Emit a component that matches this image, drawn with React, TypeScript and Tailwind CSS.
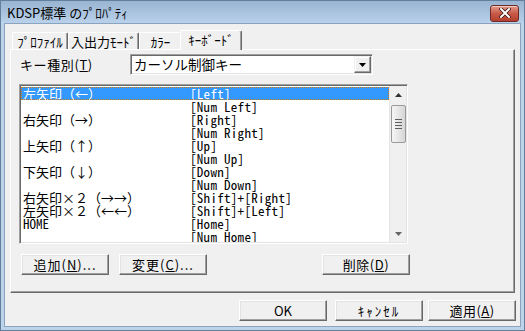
import React from "react";

const rows: [string, string][] = [
  ["左矢印（←）", "[Left]"],
  ["", "[Num Left]"],
  ["右矢印（→）", "[Right]"],
  ["", "[Num Right]"],
  ["上矢印（↑）", "[Up]"],
  ["", "[Num Up]"],
  ["下矢印（↓）", "[Down]"],
  ["", "[Num Down]"],
  ["右矢印×２（→→）", "[Shift]+[Right]"],
  ["左矢印×２（←←）", "[Shift]+[Left]"],
  ["HOME", "[Home]"],
  ["", "[Num Home]"],
];

function Btn({ w, children, cls = "" }: { w: string; children: React.ReactNode; cls?: string }) {
  return (
    <div
      className={`${w} h-[21px] flex items-center justify-center bg-[#f0f0f0] border border-t-white border-l-white border-r-[#696969] border-b-[#696969] shadow-[inset_-1px_-1px_0_#a0a0a0,inset_1px_1px_0_#e3e3e3] text-[13px] leading-none text-black ${cls}`}
    >
      {children}
    </div>
  );
}

function Tab({ w, sel, children }: { w: string; sel?: boolean; children: React.ReactNode }) {
  if (sel) {
    return (
      <div
        className={`${w} relative z-10 h-[20px] -mx-[2px] flex items-center justify-center bg-[#f0f0f0] border-l border-t border-r border-l-white border-t-white border-r-[#696969] rounded-t-[2px] shadow-[inset_-1px_0_0_#a0a0a0] text-[13px] leading-none pb-[2px]`}
      >
        {children}
      </div>
    );
  }
  return (
    <div
      className={`${w} h-[17px] mb-[1px] flex items-center justify-center bg-[#f0f0f0] border-l border-t border-r border-l-white border-t-white border-r-[#696969] rounded-t-[2px] shadow-[inset_-1px_0_0_#a0a0a0] text-[13px] leading-none`}
    >
      {children}
    </div>
  );
}

export default function App() {
  return (
    <div className="w-[525px] h-[331px] flex flex-col bg-[#bcd3ea] border border-[#62809e] font-['Noto_Sans_CJK_JP',sans-serif] text-black select-none overflow-hidden">
      {/* Title bar */}
      <div className="h-[22px] shrink-0 flex items-center justify-between bg-gradient-to-b from-[#99b4d1] to-[#b9d1ea] pl-[6px] pr-[5px]">
        <span className="text-[13px] leading-none text-black mt-[1px]">KDSP標準 のﾌﾟﾛﾊﾟﾃｨ</span>
        <div className="w-[29px] h-[17px] mt-[2px] rounded-[3px] border border-[#6b2a24] bg-gradient-to-b from-[#e39a8c] via-[#c95a48] to-[#b5402f] flex items-center justify-center shadow-[inset_0_1px_0_rgba(255,255,255,0.5)]">
          <svg width="12" height="10" viewBox="0 0 12 10">
            <path d="M2 1 L10 9 M10 1 L2 9" stroke="#3b1510" strokeWidth="3.6" strokeLinecap="square" />
            <path d="M2 1 L10 9 M10 1 L2 9" stroke="#ffffff" strokeWidth="2" strokeLinecap="square" />
          </svg>
        </div>
      </div>

      {/* Client */}
      <div className="flex-1 mx-[3px] mb-[3px] bg-[#f0f0f0] border border-[#8aa4c0] flex flex-col">
        {/* Tabs */}
        <div className="h-[20px] mt-[6px] ml-[7px] flex items-end">
          <Tab w="w-[56px]">ﾌﾟﾛﾌｧｲﾙ</Tab>
          <Tab w="w-[71px]">入出力ﾓｰﾄﾞ</Tab>
          <Tab w="w-[43px]">ｶﾗｰ</Tab>
          <Tab w="w-[62px]" sel>
            ｷｰﾎﾞｰﾄﾞ
          </Tab>
        </div>

        {/* Panel */}
        <div className="-mt-[1px] ml-[5px] w-[505px] h-[244px] border border-t-white border-l-white border-r-[#696969] border-b-[#696969] shadow-[inset_-1px_-1px_0_#a0a0a0] flex flex-col">
          {/* Key type row */}
          <div className="mt-[4px] flex items-center">
            <div className="w-[119px] pl-[9px] text-[13px] tracking-[0.6px] leading-none">
              キー種別(<span className="underline">T</span>)
            </div>
            <div className="w-[243px] h-[21px] bg-white border border-t-[#a0a0a0] border-l-[#a0a0a0] border-r-white border-b-white shadow-[inset_1px_1px_0_#696969,inset_-1px_-1px_0_#e3e3e3] flex items-center">
              <span className="flex-1 pl-[3px] text-[13.5px] leading-none">カーソル制御キー</span>
              <div className="w-[17px] h-[17px] mr-[1px] bg-[#f0f0f0] border border-t-[#f0f0f0] border-l-[#f0f0f0] border-r-[#696969] border-b-[#696969] shadow-[inset_-1px_-1px_0_#a0a0a0,inset_1px_1px_0_#ffffff] flex items-center justify-center">
                <svg width="7" height="4" viewBox="0 0 7 4">
                  <path d="M0 0 H7 L3.5 4 Z" fill="#000" />
                </svg>
              </div>
            </div>
          </div>

          {/* Listbox */}
          <div className="mt-[9px] ml-[8px] w-[389px] h-[160px] bg-white border border-t-[#a0a0a0] border-l-[#a0a0a0] border-r-white border-b-white shadow-[inset_1px_1px_0_#696969,inset_-1px_-1px_0_#e3e3e3] flex p-[1px]">
            <div className="flex-1 pt-[1px] font-['Noto_Sans_Mono_CJK_JP','Noto_Sans_CJK_JP',monospace] text-[13px] overflow-hidden">
              {rows.map(([a, b], i) => (
                <div
                  key={i}
                  className={`h-[13px] leading-[13px] flex whitespace-nowrap ${
                    i === 0 ? "bg-[#3399ff] text-white outline-1 outline-dotted outline-[#d27814] -outline-offset-1" : ""
                  }`}
                >
                  <span className="w-[169px] pl-[2px]">{a}</span>
                  <span className="tracking-[0.3px]">{b}</span>
                </div>
              ))}
            </div>
            {/* Scrollbar */}
            <div className="w-[17px] bg-[#f0f0f0] border-l border-[#e6e6e6] flex flex-col items-center">
              <div className="h-[17px] w-full flex items-center justify-center">
                <svg width="7" height="4" viewBox="0 0 7 4">
                  <path d="M0 4 H7 L3.5 0 Z" fill="#333" />
                </svg>
              </div>
              <div className="mt-[2px] w-[15px] h-[38px] rounded-[2px] border border-[#9a9a9a] bg-gradient-to-r from-[#f6f6f6] to-[#d6d6d6] flex flex-col items-center justify-center gap-[2px]">
                <div className="w-[7px] h-[1px] bg-[#5e5e5e]" />
                <div className="w-[7px] h-[1px] bg-[#5e5e5e]" />
                <div className="w-[7px] h-[1px] bg-[#5e5e5e]" />
                <div className="w-[7px] h-[1px] bg-[#5e5e5e]" />
              </div>
              <div className="flex-1" />
              <div className="h-[17px] w-full flex items-center justify-center">
                <svg width="7" height="4" viewBox="0 0 7 4">
                  <path d="M0 0 H7 L3.5 4 Z" fill="#666" />
                </svg>
              </div>
            </div>
          </div>

          {/* Panel buttons */}
          <div className="mt-[10px] ml-[10px] flex">
            <Btn w="w-[88px]" cls="tracking-[1px]">
              追加(<span className="underline">N</span>)...
            </Btn>
            <div className="w-[10px]" />
            <Btn w="w-[88px]" cls="tracking-[1px]">
              変更(<span className="underline">C</span>)...
            </Btn>
            <div className="w-[115px]" />
            <Btn w="w-[88px]" cls="tracking-[0.5px]">
              削除(<span className="underline">D</span>)
            </Btn>
          </div>
        </div>

        {/* Dialog buttons */}
        <div className="mt-[7px] ml-[234px] flex">
          <Btn w="w-[88px]">OK</Btn>
          <div className="w-[8px]" />
          <Btn w="w-[88px]" cls="tracking-[2px]">ｷｬﾝｾﾙ</Btn>
          <div className="w-[5px]" />
          <Btn w="w-[88px]" cls="tracking-[0.5px]">
            適用(<span className="underline">A</span>)
          </Btn>
        </div>
      </div>
    </div>
  );
}
